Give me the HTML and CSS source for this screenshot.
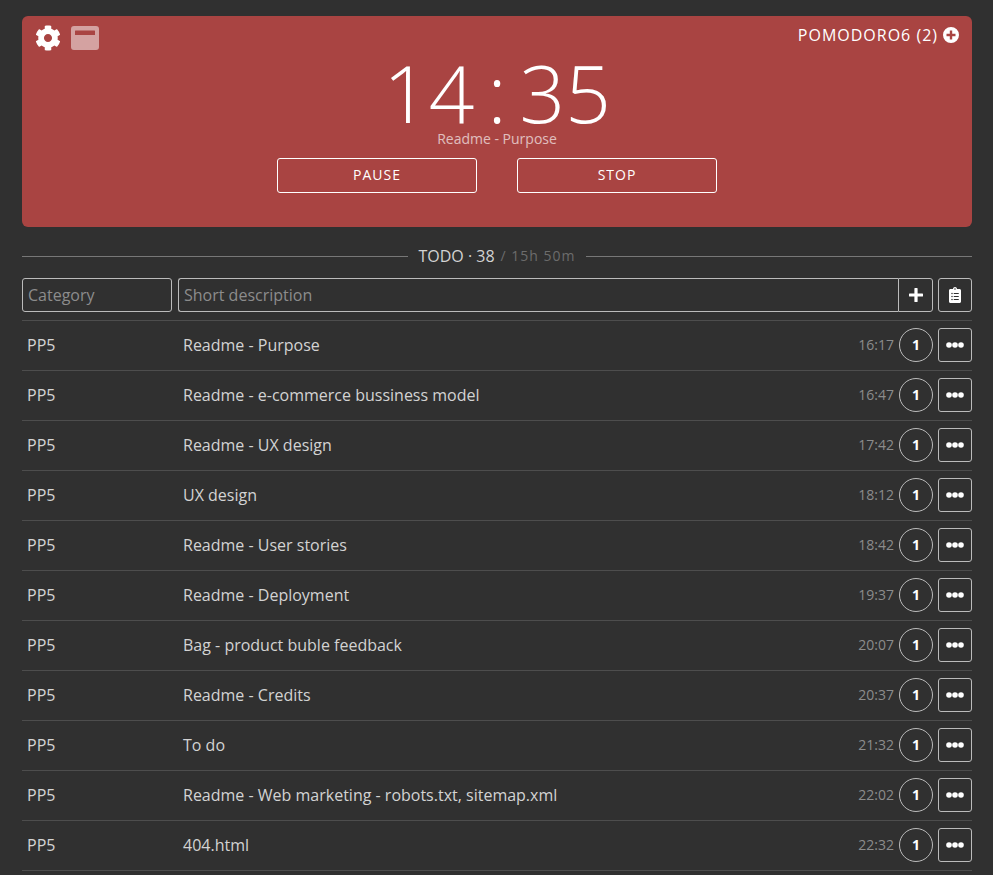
FILE: index.html
```html
<!DOCTYPE html>
<html lang="en">
<head>
<meta charset="utf-8">
<meta name="viewport" content="width=device-width, initial-scale=1">
<title>Pomodoro</title>
<link rel="stylesheet" href="styles.css">
</head>
<body>
<svg class="defs" aria-hidden="true">
  <symbol id="dots" viewBox="0 0 18 6"><circle cx="3" cy="3" r="2.8"/><circle cx="9" cy="3" r="2.8"/><circle cx="15" cy="3" r="2.8"/></symbol>
</svg>
<main class="app">
  <section class="timer">
    <div class="toolbar">
      <div class="tools">
        <button class="tool" type="button" aria-label="Settings">
          <svg class="gear" viewBox="0 0 512 512"><path d="M487.4 315.7l-42.6-24.6c4.3-23.2 4.3-47 0-70.2l42.6-24.6c4.9-2.8 7.1-8.6 5.5-14-11.1-35.6-30-67.8-54.7-94.6-3.8-4.1-10-5.1-14.8-2.3L380.8 110c-17.9-15.4-38.5-27.3-60.8-35.1V25.8c0-5.6-3.9-10.5-9.4-11.7-36.7-8.2-74.3-7.8-109.2 0-5.5 1.2-9.4 6.1-9.4 11.7V75c-22.2 7.9-42.8 19.8-60.8 35.1L88.7 85.5c-4.9-2.8-11-1.9-14.8 2.3-24.7 26.7-43.6 58.9-54.7 94.6-1.7 5.4.6 11.2 5.5 14L67.3 221c-4.3 23.2-4.3 47 0 70.2l-42.6 24.6c-4.9 2.8-7.1 8.6-5.5 14 11.1 35.6 30 67.8 54.7 94.6 3.8 4.1 10 5.1 14.8 2.3l42.6-24.6c17.9 15.4 38.5 27.3 60.8 35.1v49.2c0 5.6 3.9 10.5 9.4 11.7 36.7 8.2 74.3 7.8 109.2 0 5.5-1.2 9.4-6.1 9.4-11.7v-49.2c22.2-7.9 42.8-19.8 60.8-35.1l42.6 24.6c4.9 2.8 11 1.9 14.8-2.3 24.7-26.7 43.6-58.9 54.7-94.6 1.5-5.5-.7-11.3-5.6-14.1zM256 336c-44.1 0-80-35.9-80-80s35.9-80 80-80 80 35.9 80 80-35.9 80-80 80z"/></svg>
        </button>
        <button class="tool faded" type="button" aria-label="Compact view">
          <svg class="window" viewBox="0 0 28 24"><path fill-rule="evenodd" d="M3 0h22a3 3 0 0 1 3 3v18a3 3 0 0 1-3 3H3a3 3 0 0 1-3-3V3a3 3 0 0 1 3-3zM4.500 4.500a.5.5 0 0 0-.5.5v4h20V5a.5.5 0 0 0-.5-.5z"/></svg>
        </button>
      </div>
      <button class="session" type="button">POMODORO6 (2)
        <svg class="add" viewBox="0 0 16 16"><path fill-rule="evenodd" d="M8 0a8 8 0 1 1 0 16A8 8 0 0 1 8 0zM6.800 3.500v3.300H3.500v2.400h3.300v3.300h2.400V9.200h3.300V6.800H9.200V3.500z"/></svg>
      </button>
    </div>
    <div class="clock"><span>14</span><span>:</span><span>35</span></div>
    <p class="current">Readme - Purpose</p>
    <div class="actions">
      <button class="action" type="button">PAUSE</button>
      <button class="action" type="button">STOP</button>
    </div>
  </section>

  <h1 class="heading"><span>TODO · 38</span><span class="total">/ 15h 50m</span></h1>

  <form class="entry">
    <input class="field category" type="text" placeholder="Category" aria-label="Category">
    <div class="group">
      <input class="field" type="text" placeholder="Short description" aria-label="Short description">
      <button class="square" type="button" aria-label="Add task"><svg class="plus" viewBox="0 0 14 14"><path d="M6 0h2a.6.6 0 0 1 .6.6v4.800h4.800a.6.6 0 0 1 .6.6v2a.6.6 0 0 1-.6.6H8.600v4.800a.6.6 0 0 1-.6.6H6a.6.6 0 0 1-.6-.6V8.600H.6A.6.6 0 0 1 0 8V6a.6.6 0 0 1 .6-.6h4.800V.6A.6.6 0 0 1 6 0z"/></svg></button>
    </div>
    <button class="square" type="button" aria-label="Task list"><svg class="clip" viewBox="0 0 384 512"><path fill-rule="evenodd" d="M336 64h-80c0-35.300-28.700-64-64-64s-64 28.700-64 64H48C21.500 64 0 85.500 0 112v352c0 26.500 21.500 48 48 48h288c26.500 0 48-21.500 48-48V112c0-26.500-21.500-48-48-48zM192 40a24 24 0 1 1 0 48 24 24 0 0 1 0-48zM96 184a24 24 0 1 1 0 48 24 24 0 0 1 0-48zm0 96a24 24 0 1 1 0 48 24 24 0 0 1 0-48zm0 96a24 24 0 1 1 0 48 24 24 0 0 1 0-48zM152 192h160v32H152zm0 96h160v32H152zm0 96h160v32H152z"/></svg></button>
  </form>

  <table class="tasks">
    <tbody>
      <tr><td class="cat">PP5</td><td>Readme - Purpose</td><td class="end"><div class="meta"><time>16:17</time><button class="count" type="button">1</button><button class="square" type="button" aria-label="More"><svg class="dots"><use href="#dots"/></svg></button></div></td></tr>
      <tr><td class="cat">PP5</td><td>Readme - e-commerce bussiness model</td><td class="end"><div class="meta"><time>16:47</time><button class="count" type="button">1</button><button class="square" type="button" aria-label="More"><svg class="dots"><use href="#dots"/></svg></button></div></td></tr>
      <tr><td class="cat">PP5</td><td>Readme - UX design</td><td class="end"><div class="meta"><time>17:42</time><button class="count" type="button">1</button><button class="square" type="button" aria-label="More"><svg class="dots"><use href="#dots"/></svg></button></div></td></tr>
      <tr><td class="cat">PP5</td><td>UX design</td><td class="end"><div class="meta"><time>18:12</time><button class="count" type="button">1</button><button class="square" type="button" aria-label="More"><svg class="dots"><use href="#dots"/></svg></button></div></td></tr>
      <tr><td class="cat">PP5</td><td>Readme - User stories</td><td class="end"><div class="meta"><time>18:42</time><button class="count" type="button">1</button><button class="square" type="button" aria-label="More"><svg class="dots"><use href="#dots"/></svg></button></div></td></tr>
      <tr><td class="cat">PP5</td><td>Readme - Deployment</td><td class="end"><div class="meta"><time>19:37</time><button class="count" type="button">1</button><button class="square" type="button" aria-label="More"><svg class="dots"><use href="#dots"/></svg></button></div></td></tr>
      <tr><td class="cat">PP5</td><td>Bag - product buble feedback</td><td class="end"><div class="meta"><time>20:07</time><button class="count" type="button">1</button><button class="square" type="button" aria-label="More"><svg class="dots"><use href="#dots"/></svg></button></div></td></tr>
      <tr><td class="cat">PP5</td><td>Readme - Credits</td><td class="end"><div class="meta"><time>20:37</time><button class="count" type="button">1</button><button class="square" type="button" aria-label="More"><svg class="dots"><use href="#dots"/></svg></button></div></td></tr>
      <tr><td class="cat">PP5</td><td>To do</td><td class="end"><div class="meta"><time>21:32</time><button class="count" type="button">1</button><button class="square" type="button" aria-label="More"><svg class="dots"><use href="#dots"/></svg></button></div></td></tr>
      <tr><td class="cat">PP5</td><td>Readme - Web marketing - robots.txt, sitemap.xml</td><td class="end"><div class="meta"><time>22:02</time><button class="count" type="button">1</button><button class="square" type="button" aria-label="More"><svg class="dots"><use href="#dots"/></svg></button></div></td></tr>
      <tr><td class="cat">PP5</td><td>404.html</td><td class="end"><div class="meta"><time>22:32</time><button class="count" type="button">1</button><button class="square" type="button" aria-label="More"><svg class="dots"><use href="#dots"/></svg></button></div></td></tr>
    </tbody>
  </table>
</main>
</body>
</html>
```
FILE: styles.css
```css
* { box-sizing: border-box; }

body {
  margin: 0;
  background: #303030;
  color: #d3d3d3;
  font: 16px/24px "Open Sans", sans-serif;
}

button, input { font: inherit; color: inherit; margin: 0; }
button { background: none; border: 0; padding: 0; cursor: pointer; }
svg { display: block; fill: currentColor; }
.defs { display: none; }

.app { padding: 16px 21px 0 22px; }

.timer {
  background: #a94442;
  color: #fff;
  border-radius: 6px;
  padding: 8px 13px 34px;
}

.toolbar {
  display: flex;
  justify-content: space-between;
  align-items: flex-start;
  margin-bottom: 2px;
}
.tools { display: flex; align-items: center; gap: 10px; }
.tool { display: flex; align-items: center; height: 28px; }
.faded { opacity: .5; }
.gear { width: 26px; height: 26px; }
.window { width: 28px; height: 24px; }
.session {
  display: flex;
  align-items: center;
  gap: 5px;
  height: 22px;
  letter-spacing: 1px;
}
.add { width: 16px; height: 16px; }

.clock {
  display: flex;
  justify-content: center;
  gap: 13px;
  font-size: 80px;
  font-weight: 300;
  line-height: 76px;
}

.current {
  margin: 0;
  text-align: center;
  font-size: 14px;
  line-height: 18px;
  opacity: .65;
}

.actions { display: flex; justify-content: center; gap: 40px; margin-top: 10px; }
.action {
  width: 200px;
  height: 35px;
  border: 1px solid #fff;
  border-radius: 3px;
  font-size: 14px;
  line-height: 20px;
  padding-bottom: 2px;
  letter-spacing: 1px;
}

.heading {
  display: flex;
  align-items: center;
  gap: 10px;
  margin: 17px 0 10px;
  font-size: 16px;
  font-weight: 400;
}
.heading::before, .heading::after {
  content: "";
  flex: 1;
  height: 1px;
  background: #777;
}
.total {
  color: #6c6c6c;
  font-size: 14px;
  letter-spacing: 1px;
  margin-left: -4px;
}

.entry { display: flex; gap: 5px; margin-bottom: 8px; }
.field {
  height: 34px;
  min-width: 0;
  padding: 0 5px;
  background: none;
  border: 1px solid #bbb;
  border-radius: 3px;
}
.field::placeholder { color: #8c8c8c; opacity: 1; }
.category { width: 150px; margin-right: 1px; }
.group { display: flex; flex: 1; }
.group .field { flex: 1; border-right: 0; border-radius: 3px 0 0 3px; }
.group .square { border-radius: 0 3px 3px 0; width: 35px; }

.square {
  display: flex;
  justify-content: center;
  align-items: center;
  flex: none;
  width: 34px;
  height: 34px;
  border: 1px solid #bbb;
  border-radius: 3px;
  color: #fff;
}
.plus { width: 14px; height: 14px; }
.clip { width: 12px; height: 16px; }
.dots { width: 18px; height: 6px; }

.tasks { width: 100%; border-collapse: collapse; border-top: 1px solid #4d4d4d; }
.tasks tr { border-bottom: 1px solid #4d4d4d; }
.tasks td { height: 50px; padding: 0 5px 2px; }
.tasks .cat { width: 156px; }
.tasks .end { width: 130px; padding: 0 0 2px; }

.meta {
  display: flex;
  justify-content: flex-end;
  align-items: center;
  gap: 5px;
}
.meta time { color: #8c8c8c; font-size: 14px; }
.count {
  width: 34px;
  height: 34px;
  border: 1px solid #bbb;
  border-radius: 50%;
  color: #fff;
  font-size: 14px;
  font-weight: 700;
}
```
